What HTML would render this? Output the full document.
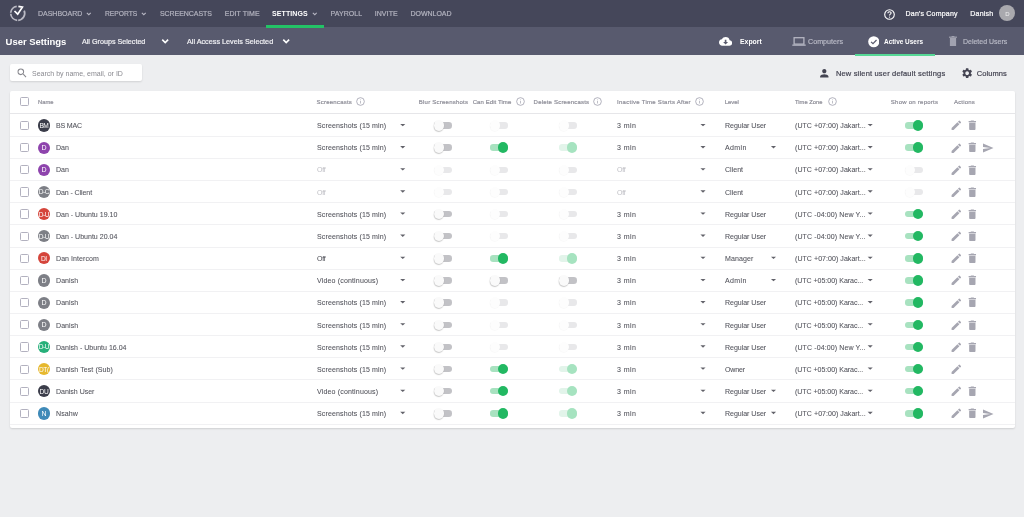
<!DOCTYPE html>
<html><head><meta charset="utf-8"><title>User Settings</title><style>
*{margin:0;padding:0;box-sizing:border-box}
html,body{width:1024px;height:517px;overflow:hidden;background:#edeef0;font-family:"Liberation Sans",sans-serif}
.abs{position:absolute}
.nb{position:absolute;left:0;top:0;width:1024px;height:27.2px;background:#45475a}
.b2{position:absolute;left:0;top:27.2px;width:1024px;height:28.2px;background:#585a6e}
.t{position:absolute;white-space:nowrap;line-height:normal;color:#52535b;letter-spacing:-0.18px}
.rw{-webkit-text-stroke:0.07px currentColor}
.nav{color:#b3b3bf}
.act{color:#fff}
.wh{color:#fff}
.wh2{color:#f2f2f5}
.g2{color:#b9bac6}
.bold{font-weight:700}
.ph{color:#8a8a90}
.dk{color:#444452}
.hd{color:#8e8e98}
.cb{position:absolute;width:9.2px;height:9.2px;border:1.2px solid #b2b1bf;border-radius:1.5px;background:#fff}
.av{position:absolute;width:12.2px;height:12.2px;border-radius:50%;text-align:center;overflow:hidden}
.av span{position:absolute;left:-6px;right:-6px;top:2.6px;font-size:6.6px;line-height:7px;color:#fff;text-align:center;letter-spacing:-0.45px}
.trk{position:absolute;width:18px;height:6.4px;border-radius:3.2px}
.knob{position:absolute;width:10.4px;height:10.4px;border-radius:50%}
.sh{box-shadow:-0.3px 0.9px 1.1px rgba(0,0,0,0.22)}
.shl{box-shadow:-0.3px 0.8px 0.8px rgba(0,0,0,0.03)}
.caret{position:absolute;width:0;height:0;border-left:2.6px solid transparent;border-right:2.6px solid transparent;border-top:2.7px solid #62626a}
.ic{position:absolute;width:12.67px;height:12.67px}
.ic svg{width:100%;height:100%;fill:#a6a6b1;display:block}
.ln{position:absolute;left:10px;width:1005px;height:1px;background:#f1f1f3}
</style></head>
<body>
<div id="wrap" style="position:absolute;left:0;top:0;width:1024px;height:517px;will-change:transform">
<div class="nb"></div><div class="b2"></div>
<div class="t nav" style="left:38.00px;top:10.10px;font-size:7px;-webkit-text-stroke:0.2px currentColor;letter-spacing:-0.011px;">DASHBOARD</div>
<div class="t nav" style="left:104.80px;top:10.10px;font-size:7px;-webkit-text-stroke:0.2px currentColor;letter-spacing:0.000px;transform:scaleX(0.9576);transform-origin:0 0;">REPORTS</div>
<div class="t nav" style="left:160.00px;top:10.10px;font-size:7px;-webkit-text-stroke:0.2px currentColor;letter-spacing:-0.064px;">SCREENCASTS</div>
<div class="t nav" style="left:224.70px;top:10.10px;font-size:7px;-webkit-text-stroke:0.2px currentColor;letter-spacing:0.082px;">EDIT TIME</div>
<div class="t nav" style="left:330.60px;top:10.10px;font-size:7px;-webkit-text-stroke:0.2px currentColor;letter-spacing:0.057px;">PAYROLL</div>
<div class="t nav" style="left:374.70px;top:10.10px;font-size:7px;-webkit-text-stroke:0.2px currentColor;letter-spacing:0.082px;">INVITE</div>
<div class="t nav" style="left:410.50px;top:10.10px;font-size:7px;-webkit-text-stroke:0.2px currentColor;letter-spacing:-0.024px;">DOWNLOAD</div>
<div class="t nav act" style="left:272.00px;top:10.10px;font-size:7px;font-weight:700;letter-spacing:0.095px;">SETTINGS</div>
<svg class="abs" style="left:86.2px;top:11.2px" width="5.6" height="5.6" viewBox="0 0 10 10"><path d="M1.5 3.2 L5 6.7 L8.5 3.2" fill="none" stroke="#b8b8c4" stroke-width="1.9"/></svg>
<svg class="abs" style="left:141.2px;top:11.2px" width="5.6" height="5.6" viewBox="0 0 10 10"><path d="M1.5 3.2 L5 6.7 L8.5 3.2" fill="none" stroke="#b8b8c4" stroke-width="1.9"/></svg>
<svg class="abs" style="left:311.8px;top:11.2px" width="5.6" height="5.6" viewBox="0 0 10 10"><path d="M1.5 3.2 L5 6.7 L8.5 3.2" fill="none" stroke="#b8b8c4" stroke-width="1.9"/></svg>
<div class="abs" style="left:266.3px;top:24.9px;width:58.2px;height:2.7px;background:#23c366"></div>
<svg class="abs" style="left:5px;top:2px" width="25" height="23" viewBox="0 0 25 23"><path d="M5.72 10.81A7.0 7.0 0 0 1 11.73 4.37M19.19 8.68A7.0 7.0 0 0 1 13.19 18.28M12.21 18.28A7.0 7.0 0 0 1 5.72 11.79" fill="none" stroke="#babac4" stroke-width="1.75"/><path d="M9.5 9.0 L12.7 12.2 L17.4 5.2 L13.4 4.4" fill="none" stroke="#ffffff" stroke-width="1.7" stroke-linejoin="miter"/></svg>
<svg class="abs" style="left:883.5px;top:8.5px" width="11" height="11" viewBox="0 0 11 11"><circle cx="5.5" cy="5.5" r="4.8" fill="none" stroke="#fff" stroke-width="1.1"/><path d="M3.9 4.3 Q3.9 2.7 5.5 2.7 Q7.1 2.7 7.1 4.1 Q7.1 5 5.9 5.6 Q5.5 5.9 5.5 6.6" fill="none" stroke="#fff" stroke-width="1.1"/><circle cx="5.5" cy="8.1" r="0.65" fill="#fff"/></svg>
<div class="t wh" style="left:905.60px;top:9.90px;font-size:7px;-webkit-text-stroke:0.2px currentColor;letter-spacing:0.193px;">Dan&#39;s Company</div>
<div class="t wh" style="left:970.30px;top:9.90px;font-size:7px;-webkit-text-stroke:0.2px currentColor;letter-spacing:0.221px;">Danish</div>
<div class="abs" style="left:998.9px;top:5.2px;width:16.2px;height:16.2px;border-radius:50%;background:#a9a9ae"></div>
<div class="t" style="left:1005.20px;top:10.70px;font-size:6px;color:#f0f0f0">D</div>
<div class="t wh" style="left:5.60px;top:35.90px;font-size:9.5px;font-weight:700;letter-spacing:-0.046px;">User Settings</div>
<div class="t wh2" style="left:81.60px;top:37.20px;font-size:7.5px;-webkit-text-stroke:0.2px currentColor;letter-spacing:0.000px;transform:scaleX(0.9559);transform-origin:0 0;">All Groups Selected</div>
<div class="t wh2" style="left:187.00px;top:37.20px;font-size:7.5px;-webkit-text-stroke:0.2px currentColor;letter-spacing:0.000px;transform:scaleX(0.9658);transform-origin:0 0;">All Access Levels Selected</div>
<svg class="abs" style="left:160.9px;top:37.4px" width="8.4" height="8.4" viewBox="0 0 10 10"><path d="M1.5 3.2 L5 6.7 L8.5 3.2" fill="none" stroke="#ffffff" stroke-width="1.9"/></svg>
<svg class="abs" style="left:281.7px;top:37.4px" width="8.4" height="8.4" viewBox="0 0 10 10"><path d="M1.5 3.2 L5 6.7 L8.5 3.2" fill="none" stroke="#ffffff" stroke-width="1.9"/></svg>
<svg class="abs" style="left:718.9px;top:37.4px" width="13.2" height="8.8" viewBox="0 0 24 16" preserveAspectRatio="none"><path d="M19.35 6.04A7.49 7.49 0 0 0 12 0C9.11 0 6.6 1.64 5.35 4.04A5.994 5.994 0 0 0 0 10c0 3.31 2.69 6 6 6h13c2.76 0 5-2.24 5-5 0-2.64-2.05-4.78-4.65-4.96z" fill="#fff"/><path d="M10.5 5h3v4h3l-4.5 4.5L7.5 9h3z" fill="#5a5b6e"/></svg>
<div class="t wh" style="left:739.90px;top:37.30px;font-size:8px;font-weight:700;letter-spacing:0.000px;transform:scaleX(0.8570);transform-origin:0 0;">Export</div>
<svg class="abs" style="left:791.5px;top:37px" width="14" height="9" viewBox="0 0 14 9"><rect x="2.1" y="0.7" width="9.8" height="6.4" fill="none" stroke="#b4b5c2" stroke-width="1.3"/><rect x="0.3" y="7.5" width="13.4" height="1.3" fill="#b4b5c2"/></svg>
<div class="t g2" style="left:808.00px;top:37.30px;font-size:8px;-webkit-text-stroke:0.2px currentColor;letter-spacing:0.000px;transform:scaleX(0.8946);transform-origin:0 0;">Computers</div>
<svg class="abs" style="left:867.5px;top:36px" width="11.5" height="11.5" viewBox="0 0 12 12"><circle cx="6" cy="6" r="5.8" fill="#fff"/><path d="M3.2 6.1 L5.2 8 L8.9 4.2" fill="none" stroke="#5a5b6e" stroke-width="1.3"/></svg>
<div class="t wh" style="left:883.60px;top:37.30px;font-size:8px;font-weight:700;letter-spacing:0.000px;transform:scaleX(0.8037);transform-origin:0 0;">Active Users</div>
<div class="abs" style="left:855.2px;top:54.3px;width:79.6px;height:1.3px;background:#56d896"></div>
<svg class="abs" style="left:949px;top:36.3px" width="8" height="10" viewBox="0 0 8 10"><rect x="0.9" y="2" width="6.2" height="8" fill="#a1a2b0"/><rect x="0" y="0.6" width="8" height="1.2" fill="#a1a2b0"/><rect x="2.6" y="0" width="2.8" height="1" fill="#a1a2b0"/></svg>
<div class="t g2" style="left:963.00px;top:37.30px;font-size:8px;-webkit-text-stroke:0.2px currentColor;letter-spacing:0.000px;transform:scaleX(0.8720);transform-origin:0 0;">Deleted Users</div>
<div class="abs" style="left:10px;top:64px;width:132px;height:17px;background:#fff;border-radius:2px;box-shadow:0 1px 2px rgba(0,0,0,0.12)"></div>
<svg class="abs" style="left:16px;top:67px" width="12.2" height="12.2" viewBox="0 0 24 24"><path d="M15.5 14h-.79l-.28-.27A6.47 6.47 0 0 0 16 9.5 6.5 6.5 0 1 0 9.5 16c1.61 0 3.09-.59 4.23-1.57l.27.28v.79l5 4.99L20.49 19l-4.99-5zm-6 0C7.01 14 5 11.99 5 9.5S7.01 5 9.5 5 14 7.01 14 9.5 11.99 14 9.5 14z" fill="#88888e"/></svg>
<div class="t ph" style="left:31.90px;top:68.90px;font-size:8px;letter-spacing:0.000px;transform:scaleX(0.8775);transform-origin:0 0;">Search by name, email, or ID</div>
<svg class="abs" style="left:818.3px;top:66.5px" width="12.6" height="12.6" viewBox="0 0 24 24"><path d="M12 12c2.21 0 4-1.79 4-4s-1.79-4-4-4-4 1.79-4 4 1.79 4 4 4zm0 2c-2.67 0-8 1.34-8 4v2h16v-2c0-2.66-5.33-4-8-4z" fill="#444452"/></svg>
<div class="t dk" style="left:835.90px;top:69.10px;font-size:7.5px;-webkit-text-stroke:0.2px currentColor;letter-spacing:0.176px;">New silent user default settings</div>
<svg class="abs" style="left:961.2px;top:66.9px" width="12.3" height="12.3" viewBox="0 0 24 24"><path d="M19.14 12.94c.04-.3.06-.61.06-.94 0-.32-.02-.64-.07-.94l2.03-1.58a.49.49 0 0 0 .12-.61l-1.92-3.32a.488.488 0 0 0-.59-.22l-2.39.96c-.5-.38-1.03-.7-1.62-.94l-.36-2.54a.484.484 0 0 0-.48-.41h-3.84c-.24 0-.43.17-.47.41l-.36 2.54c-.59.24-1.13.57-1.62.94l-2.39-.96c-.22-.08-.47 0-.59.22L2.74 8.87c-.12.21-.08.47.12.61l2.03 1.58c-.05.3-.09.63-.09.94s.02.64.07.94l-2.03 1.58a.49.49 0 0 0-.12.61l1.92 3.32c.12.22.37.29.59.22l2.39-.96c.5.38 1.03.7 1.62.94l.36 2.54c.05.24.24.41.48.41h3.84c.24 0 .44-.17.47-.41l.36-2.54c.59-.24 1.13-.56 1.62-.94l2.39.96c.22.08.47 0 .59-.22l1.92-3.32c.12-.22.07-.47-.12-.61l-2.01-1.58zM12 15.6c-1.98 0-3.6-1.62-3.6-3.6s1.62-3.6 3.6-3.6 3.6 1.62 3.6 3.6-1.62 3.6-3.6 3.6z" fill="#444452"/></svg>
<div class="t dk" style="left:976.80px;top:69.10px;font-size:7.5px;-webkit-text-stroke:0.2px currentColor;letter-spacing:0.043px;">Columns</div>
<div class="abs" style="left:10px;top:91px;width:1005px;height:337px;background:#fff;border-radius:2px;box-shadow:0 1px 2px rgba(0,0,0,0.13)"></div>
<div class="cb" style="left:19.5px;top:97.2px"></div>
<div class="t hd" style="left:37.80px;top:99.10px;font-size:6px;-webkit-text-stroke:0.2px currentColor;letter-spacing:0.000px;transform:scaleX(0.9659);transform-origin:0 0;">Name</div>
<div class="t hd" style="left:316.60px;top:99.10px;font-size:6px;-webkit-text-stroke:0.2px currentColor;letter-spacing:0.219px;">Screencasts</div>
<svg class="abs" style="left:355.5px;top:97.2px" width="9" height="9" viewBox="0 0 9 9"><circle cx="4.5" cy="4.5" r="3.85" fill="none" stroke="#9a9aa8" stroke-width="0.75"/><rect x="4.15" y="3.9" width="0.7" height="2.6" fill="#a4a4b0"/><rect x="4.15" y="2.5" width="0.7" height="0.7" fill="#a4a4b0"/></svg>
<div class="t hd" style="left:418.75px;top:99.10px;font-size:6px;-webkit-text-stroke:0.2px currentColor;letter-spacing:0.237px;">Blur Screenshots</div>
<div class="t hd" style="left:472.70px;top:99.10px;font-size:6px;-webkit-text-stroke:0.2px currentColor;letter-spacing:0.071px;">Can Edit Time</div>
<svg class="abs" style="left:515.7px;top:97.2px" width="9" height="9" viewBox="0 0 9 9"><circle cx="4.5" cy="4.5" r="3.85" fill="none" stroke="#9a9aa8" stroke-width="0.75"/><rect x="4.15" y="3.9" width="0.7" height="2.6" fill="#a4a4b0"/><rect x="4.15" y="2.5" width="0.7" height="0.7" fill="#a4a4b0"/></svg>
<div class="t hd" style="left:533.60px;top:99.10px;font-size:6px;-webkit-text-stroke:0.2px currentColor;letter-spacing:0.199px;">Delete Screencasts</div>
<svg class="abs" style="left:592.5px;top:97.2px" width="9" height="9" viewBox="0 0 9 9"><circle cx="4.5" cy="4.5" r="3.85" fill="none" stroke="#9a9aa8" stroke-width="0.75"/><rect x="4.15" y="3.9" width="0.7" height="2.6" fill="#a4a4b0"/><rect x="4.15" y="2.5" width="0.7" height="0.7" fill="#a4a4b0"/></svg>
<div class="t hd" style="left:617.00px;top:99.10px;font-size:6px;-webkit-text-stroke:0.2px currentColor;letter-spacing:0.275px;">Inactive Time Starts After</div>
<svg class="abs" style="left:694.5px;top:97.2px" width="9" height="9" viewBox="0 0 9 9"><circle cx="4.5" cy="4.5" r="3.85" fill="none" stroke="#9a9aa8" stroke-width="0.75"/><rect x="4.15" y="3.9" width="0.7" height="2.6" fill="#a4a4b0"/><rect x="4.15" y="2.5" width="0.7" height="0.7" fill="#a4a4b0"/></svg>
<div class="t hd" style="left:724.70px;top:99.10px;font-size:6px;-webkit-text-stroke:0.2px currentColor;letter-spacing:-0.028px;">Level</div>
<div class="t hd" style="left:795.00px;top:99.10px;font-size:6px;-webkit-text-stroke:0.2px currentColor;letter-spacing:0.000px;transform:scaleX(0.9617);transform-origin:0 0;">Time Zone</div>
<svg class="abs" style="left:827.5px;top:97.2px" width="9" height="9" viewBox="0 0 9 9"><circle cx="4.5" cy="4.5" r="3.85" fill="none" stroke="#9a9aa8" stroke-width="0.75"/><rect x="4.15" y="3.9" width="0.7" height="2.6" fill="#a4a4b0"/><rect x="4.15" y="2.5" width="0.7" height="0.7" fill="#a4a4b0"/></svg>
<div class="t hd" style="left:890.80px;top:99.10px;font-size:6px;-webkit-text-stroke:0.2px currentColor;letter-spacing:0.251px;">Show on reports</div>
<div class="t hd" style="left:954.00px;top:99.10px;font-size:6px;-webkit-text-stroke:0.2px currentColor;letter-spacing:0.171px;">Actions</div>
<div class="ln" style="top:113.4px;background:#e6e6e9"></div>
<div class="cb" style="left:19.7px;top:120.88px"></div>
<div class="av" style="left:37.8px;top:119.38px;background:#3b3d4a"><span>BM</span></div>
<div class="t rw" style="left:55.90px;top:121.18px;font-size:8px;letter-spacing:-0.202px;transform:scaleX(0.8800);transform-origin:0 0;">BS MAC</div>
<div class="t rw" style="left:316.60px;top:121.18px;font-size:8px;letter-spacing:0.131px;transform:scaleX(0.8800);transform-origin:0 0;">Screenshots (15 min)</div>

<div class="trk" style="left:434.30px;top:122.28px;background:#c2c2c6"></div><div class="knob sh" style="left:434.10px;top:120.28px;background:#fafafa"></div>
<div class="trk" style="left:489.80px;top:122.28px;background:#e8e8ea"></div><div class="knob shl" style="left:489.60px;top:120.28px;background:#fdfdfd"></div>
<div class="trk" style="left:559.00px;top:122.28px;background:#e8e8ea"></div><div class="knob shl" style="left:558.80px;top:120.28px;background:#fdfdfd"></div>
<div class="t rw" style="left:617.00px;top:121.18px;font-size:8px;letter-spacing:0.477px;transform:scaleX(0.8800);transform-origin:0 0;">3 min</div>

<div class="t rw" style="left:724.70px;top:121.18px;font-size:8px;letter-spacing:-0.038px;transform:scaleX(0.8800);transform-origin:0 0;">Regular User</div>
<div class="t rw" style="left:795.00px;top:121.18px;font-size:8px;letter-spacing:0.047px;transform:scaleX(0.8800);transform-origin:0 0;">(UTC +07:00) Jakart...</div>

<div class="trk" style="left:905.10px;top:122.28px;background:#a8e2c0"></div><div class="knob" style="left:912.90px;top:120.28px;background:#22b862"></div>
<div class="ic" style="left:949.6px;top:119.38px"><svg viewBox="0 0 24 24"><path d="M3 17.25V21h3.75L17.81 9.94l-3.75-3.75L3 17.25zM20.71 7.04a1 1 0 0 0 0-1.41l-2.34-2.34a1 1 0 0 0-1.41 0l-1.83 1.83 3.75 3.75 1.83-1.83z"/></svg></div>
<div class="ic" style="left:965.9px;top:119.28px"><svg viewBox="0 0 24 24"><path d="M6 19c0 1.1.9 2 2 2h8c1.1 0 2-.9 2-2V7H6v12zM19 4h-3.5l-1-1h-5l-1 1H5v2h14V4z"/></svg></div>
<div class="ln" style="top:135.80px"></div>
<div class="cb" style="left:19.7px;top:143.03px"></div>
<div class="av" style="left:37.8px;top:141.53px;background:#8e44ad"><span style="font-size:7px;top:2.6px">D</span></div>
<div class="t rw" style="left:55.90px;top:143.32px;font-size:8px;letter-spacing:-0.068px;transform:scaleX(0.8800);transform-origin:0 0;">Dan</div>
<div class="t rw" style="left:316.60px;top:143.32px;font-size:8px;letter-spacing:0.131px;transform:scaleX(0.8800);transform-origin:0 0;">Screenshots (15 min)</div>

<div class="trk" style="left:434.30px;top:144.43px;background:#c2c2c6"></div><div class="knob sh" style="left:434.10px;top:142.43px;background:#fafafa"></div>
<div class="trk" style="left:489.80px;top:144.43px;background:#a8e2c0"></div><div class="knob" style="left:497.60px;top:142.43px;background:#22b862"></div>
<div class="trk" style="left:559.00px;top:144.43px;background:#e2f4ea"></div><div class="knob" style="left:566.80px;top:142.43px;background:#a6e3c0"></div>
<div class="t rw" style="left:617.00px;top:143.32px;font-size:8px;letter-spacing:0.477px;transform:scaleX(0.8800);transform-origin:0 0;">3 min</div>

<div class="t rw" style="left:724.70px;top:143.32px;font-size:8px;letter-spacing:0.409px;transform:scaleX(0.8800);transform-origin:0 0;">Admin</div>

<div class="t rw" style="left:795.00px;top:143.32px;font-size:8px;letter-spacing:0.047px;transform:scaleX(0.8800);transform-origin:0 0;">(UTC +07:00) Jakart...</div>

<div class="trk" style="left:905.10px;top:144.43px;background:#a8e2c0"></div><div class="knob" style="left:912.90px;top:142.43px;background:#22b862"></div>
<div class="ic" style="left:949.6px;top:141.53px"><svg viewBox="0 0 24 24"><path d="M3 17.25V21h3.75L17.81 9.94l-3.75-3.75L3 17.25zM20.71 7.04a1 1 0 0 0 0-1.41l-2.34-2.34a1 1 0 0 0-1.41 0l-1.83 1.83 3.75 3.75 1.83-1.83z"/></svg></div>
<div class="ic" style="left:965.9px;top:141.43px"><svg viewBox="0 0 24 24"><path d="M6 19c0 1.1.9 2 2 2h8c1.1 0 2-.9 2-2V7H6v12zM19 4h-3.5l-1-1h-5l-1 1H5v2h14V4z"/></svg></div>
<div class="ic" style="left:981.9px;top:142.03px;width:12px;height:12px"><svg viewBox="0 0 24 24"><path d="M2.01 21L23 12 2.01 3 2 10l15 2-15 2z"/></svg></div>
<div class="ln" style="top:157.95px"></div>
<div class="cb" style="left:19.7px;top:165.17px"></div>
<div class="av" style="left:37.8px;top:163.67px;background:#8e44ad"><span style="font-size:7px;top:2.6px">D</span></div>
<div class="t rw" style="left:55.90px;top:165.47px;font-size:8px;letter-spacing:-0.068px;transform:scaleX(0.8800);transform-origin:0 0;">Dan</div>
<div class="t rw" style="left:316.60px;top:165.47px;font-size:8px;letter-spacing:-0.253px;transform:scaleX(0.8800);transform-origin:0 0;color:#c3c3c8">Off</div>

<div class="trk" style="left:434.30px;top:166.57px;background:#e8e8ea"></div><div class="knob shl" style="left:434.10px;top:164.57px;background:#fdfdfd"></div>
<div class="trk" style="left:489.80px;top:166.57px;background:#e8e8ea"></div><div class="knob shl" style="left:489.60px;top:164.57px;background:#fdfdfd"></div>
<div class="trk" style="left:559.00px;top:166.57px;background:#e8e8ea"></div><div class="knob shl" style="left:558.80px;top:164.57px;background:#fdfdfd"></div>
<div class="t rw" style="left:617.00px;top:165.47px;font-size:8px;letter-spacing:-0.253px;transform:scaleX(0.8800);transform-origin:0 0;color:#c3c3c8">Off</div>

<div class="t rw" style="left:724.70px;top:165.47px;font-size:8px;letter-spacing:0.004px;transform:scaleX(0.8800);transform-origin:0 0;">Client</div>
<div class="t rw" style="left:795.00px;top:165.47px;font-size:8px;letter-spacing:0.047px;transform:scaleX(0.8800);transform-origin:0 0;">(UTC +07:00) Jakart...</div>

<div class="trk" style="left:905.10px;top:166.57px;background:#e8e8ea"></div><div class="knob shl" style="left:904.90px;top:164.57px;background:#fdfdfd"></div>
<div class="ic" style="left:949.6px;top:163.67px"><svg viewBox="0 0 24 24"><path d="M3 17.25V21h3.75L17.81 9.94l-3.75-3.75L3 17.25zM20.71 7.04a1 1 0 0 0 0-1.41l-2.34-2.34a1 1 0 0 0-1.41 0l-1.83 1.83 3.75 3.75 1.83-1.83z"/></svg></div>
<div class="ic" style="left:965.9px;top:163.57px"><svg viewBox="0 0 24 24"><path d="M6 19c0 1.1.9 2 2 2h8c1.1 0 2-.9 2-2V7H6v12zM19 4h-3.5l-1-1h-5l-1 1H5v2h14V4z"/></svg></div>
<div class="ln" style="top:180.10px"></div>
<div class="cb" style="left:19.7px;top:187.32px"></div>
<div class="av" style="left:37.8px;top:185.82px;background:#7d7f86"><span>D-C</span></div>
<div class="t rw" style="left:55.90px;top:187.62px;font-size:8px;letter-spacing:-0.109px;transform:scaleX(0.8800);transform-origin:0 0;">Dan - Client</div>
<div class="t rw" style="left:316.60px;top:187.62px;font-size:8px;letter-spacing:-0.253px;transform:scaleX(0.8800);transform-origin:0 0;color:#c3c3c8">Off</div>

<div class="trk" style="left:434.30px;top:188.72px;background:#e8e8ea"></div><div class="knob shl" style="left:434.10px;top:186.72px;background:#fdfdfd"></div>
<div class="trk" style="left:489.80px;top:188.72px;background:#e8e8ea"></div><div class="knob shl" style="left:489.60px;top:186.72px;background:#fdfdfd"></div>
<div class="trk" style="left:559.00px;top:188.72px;background:#e8e8ea"></div><div class="knob shl" style="left:558.80px;top:186.72px;background:#fdfdfd"></div>
<div class="t rw" style="left:617.00px;top:187.62px;font-size:8px;letter-spacing:-0.253px;transform:scaleX(0.8800);transform-origin:0 0;color:#c3c3c8">Off</div>

<div class="t rw" style="left:724.70px;top:187.62px;font-size:8px;letter-spacing:0.004px;transform:scaleX(0.8800);transform-origin:0 0;">Client</div>
<div class="t rw" style="left:795.00px;top:187.62px;font-size:8px;letter-spacing:0.047px;transform:scaleX(0.8800);transform-origin:0 0;">(UTC +07:00) Jakart...</div>

<div class="trk" style="left:905.10px;top:188.72px;background:#e8e8ea"></div><div class="knob shl" style="left:904.90px;top:186.72px;background:#fdfdfd"></div>
<div class="ic" style="left:949.6px;top:185.82px"><svg viewBox="0 0 24 24"><path d="M3 17.25V21h3.75L17.81 9.94l-3.75-3.75L3 17.25zM20.71 7.04a1 1 0 0 0 0-1.41l-2.34-2.34a1 1 0 0 0-1.41 0l-1.83 1.83 3.75 3.75 1.83-1.83z"/></svg></div>
<div class="ic" style="left:965.9px;top:185.72px"><svg viewBox="0 0 24 24"><path d="M6 19c0 1.1.9 2 2 2h8c1.1 0 2-.9 2-2V7H6v12zM19 4h-3.5l-1-1h-5l-1 1H5v2h14V4z"/></svg></div>
<div class="ln" style="top:202.25px"></div>
<div class="cb" style="left:19.7px;top:209.47px"></div>
<div class="av" style="left:37.8px;top:207.97px;background:#d5453b"><span>D-U</span></div>
<div class="t rw" style="left:55.90px;top:209.77px;font-size:8px;letter-spacing:-0.009px;transform:scaleX(0.8800);transform-origin:0 0;">Dan - Ubuntu 19.10</div>
<div class="t rw" style="left:316.60px;top:209.77px;font-size:8px;letter-spacing:0.131px;transform:scaleX(0.8800);transform-origin:0 0;">Screenshots (15 min)</div>

<div class="trk" style="left:434.30px;top:210.88px;background:#c2c2c6"></div><div class="knob sh" style="left:434.10px;top:208.88px;background:#fafafa"></div>
<div class="trk" style="left:489.80px;top:210.88px;background:#e8e8ea"></div><div class="knob shl" style="left:489.60px;top:208.88px;background:#fdfdfd"></div>
<div class="trk" style="left:559.00px;top:210.88px;background:#e8e8ea"></div><div class="knob shl" style="left:558.80px;top:208.88px;background:#fdfdfd"></div>
<div class="t rw" style="left:617.00px;top:209.77px;font-size:8px;letter-spacing:0.477px;transform:scaleX(0.8800);transform-origin:0 0;">3 min</div>

<div class="t rw" style="left:724.70px;top:209.77px;font-size:8px;letter-spacing:-0.038px;transform:scaleX(0.8800);transform-origin:0 0;">Regular User</div>
<div class="t rw" style="left:795.00px;top:209.77px;font-size:8px;letter-spacing:0.106px;transform:scaleX(0.8800);transform-origin:0 0;">(UTC -04:00) New Y...</div>

<div class="trk" style="left:905.10px;top:210.88px;background:#a8e2c0"></div><div class="knob" style="left:912.90px;top:208.88px;background:#22b862"></div>
<div class="ic" style="left:949.6px;top:207.97px"><svg viewBox="0 0 24 24"><path d="M3 17.25V21h3.75L17.81 9.94l-3.75-3.75L3 17.25zM20.71 7.04a1 1 0 0 0 0-1.41l-2.34-2.34a1 1 0 0 0-1.41 0l-1.83 1.83 3.75 3.75 1.83-1.83z"/></svg></div>
<div class="ic" style="left:965.9px;top:207.88px"><svg viewBox="0 0 24 24"><path d="M6 19c0 1.1.9 2 2 2h8c1.1 0 2-.9 2-2V7H6v12zM19 4h-3.5l-1-1h-5l-1 1H5v2h14V4z"/></svg></div>
<div class="ln" style="top:224.40px"></div>
<div class="cb" style="left:19.7px;top:231.62px"></div>
<div class="av" style="left:37.8px;top:230.12px;background:#7d7f86"><span>D-U</span></div>
<div class="t rw" style="left:55.90px;top:231.92px;font-size:8px;letter-spacing:-0.009px;transform:scaleX(0.8800);transform-origin:0 0;">Dan - Ubuntu 20.04</div>
<div class="t rw" style="left:316.60px;top:231.92px;font-size:8px;letter-spacing:0.131px;transform:scaleX(0.8800);transform-origin:0 0;">Screenshots (15 min)</div>

<div class="trk" style="left:434.30px;top:233.03px;background:#c2c2c6"></div><div class="knob sh" style="left:434.10px;top:231.03px;background:#fafafa"></div>
<div class="trk" style="left:489.80px;top:233.03px;background:#e8e8ea"></div><div class="knob shl" style="left:489.60px;top:231.03px;background:#fdfdfd"></div>
<div class="trk" style="left:559.00px;top:233.03px;background:#e8e8ea"></div><div class="knob shl" style="left:558.80px;top:231.03px;background:#fdfdfd"></div>
<div class="t rw" style="left:617.00px;top:231.92px;font-size:8px;letter-spacing:0.477px;transform:scaleX(0.8800);transform-origin:0 0;">3 min</div>

<div class="t rw" style="left:724.70px;top:231.92px;font-size:8px;letter-spacing:-0.038px;transform:scaleX(0.8800);transform-origin:0 0;">Regular User</div>
<div class="t rw" style="left:795.00px;top:231.92px;font-size:8px;letter-spacing:0.106px;transform:scaleX(0.8800);transform-origin:0 0;">(UTC -04:00) New Y...</div>

<div class="trk" style="left:905.10px;top:233.03px;background:#a8e2c0"></div><div class="knob" style="left:912.90px;top:231.03px;background:#22b862"></div>
<div class="ic" style="left:949.6px;top:230.12px"><svg viewBox="0 0 24 24"><path d="M3 17.25V21h3.75L17.81 9.94l-3.75-3.75L3 17.25zM20.71 7.04a1 1 0 0 0 0-1.41l-2.34-2.34a1 1 0 0 0-1.41 0l-1.83 1.83 3.75 3.75 1.83-1.83z"/></svg></div>
<div class="ic" style="left:965.9px;top:230.03px"><svg viewBox="0 0 24 24"><path d="M6 19c0 1.1.9 2 2 2h8c1.1 0 2-.9 2-2V7H6v12zM19 4h-3.5l-1-1h-5l-1 1H5v2h14V4z"/></svg></div>
<div class="ln" style="top:246.55px"></div>
<div class="cb" style="left:19.7px;top:253.78px"></div>
<div class="av" style="left:37.8px;top:252.28px;background:#d5453b"><span>DI</span></div>
<div class="t rw" style="left:55.90px;top:254.07px;font-size:8px;letter-spacing:0.067px;transform:scaleX(0.8800);transform-origin:0 0;">Dan Intercom</div>
<div class="t rw" style="left:316.60px;top:254.07px;font-size:8px;letter-spacing:-0.253px;transform:scaleX(0.8800);transform-origin:0 0;">Off</div>

<div class="trk" style="left:434.30px;top:255.18px;background:#c2c2c6"></div><div class="knob sh" style="left:434.10px;top:253.18px;background:#fafafa"></div>
<div class="trk" style="left:489.80px;top:255.18px;background:#a8e2c0"></div><div class="knob" style="left:497.60px;top:253.18px;background:#22b862"></div>
<div class="trk" style="left:559.00px;top:255.18px;background:#e2f4ea"></div><div class="knob" style="left:566.80px;top:253.18px;background:#a6e3c0"></div>
<div class="t rw" style="left:617.00px;top:254.07px;font-size:8px;letter-spacing:0.477px;transform:scaleX(0.8800);transform-origin:0 0;">3 min</div>

<div class="t rw" style="left:724.70px;top:254.07px;font-size:8px;letter-spacing:0.117px;transform:scaleX(0.8800);transform-origin:0 0;">Manager</div>

<div class="t rw" style="left:795.00px;top:254.07px;font-size:8px;letter-spacing:0.047px;transform:scaleX(0.8800);transform-origin:0 0;">(UTC +07:00) Jakart...</div>

<div class="trk" style="left:905.10px;top:255.18px;background:#a8e2c0"></div><div class="knob" style="left:912.90px;top:253.18px;background:#22b862"></div>
<div class="ic" style="left:949.6px;top:252.28px"><svg viewBox="0 0 24 24"><path d="M3 17.25V21h3.75L17.81 9.94l-3.75-3.75L3 17.25zM20.71 7.04a1 1 0 0 0 0-1.41l-2.34-2.34a1 1 0 0 0-1.41 0l-1.83 1.83 3.75 3.75 1.83-1.83z"/></svg></div>
<div class="ic" style="left:965.9px;top:252.18px"><svg viewBox="0 0 24 24"><path d="M6 19c0 1.1.9 2 2 2h8c1.1 0 2-.9 2-2V7H6v12zM19 4h-3.5l-1-1h-5l-1 1H5v2h14V4z"/></svg></div>
<div class="ln" style="top:268.70px"></div>
<div class="cb" style="left:19.7px;top:275.92px"></div>
<div class="av" style="left:37.8px;top:274.42px;background:#7d7f86"><span style="font-size:7px;top:2.6px">D</span></div>
<div class="t rw" style="left:55.90px;top:276.22px;font-size:8px;letter-spacing:0.064px;transform:scaleX(0.8800);transform-origin:0 0;">Danish</div>
<div class="t rw" style="left:316.60px;top:276.22px;font-size:8px;letter-spacing:0.169px;transform:scaleX(0.8800);transform-origin:0 0;">Video (continuous)</div>

<div class="trk" style="left:434.30px;top:277.32px;background:#c2c2c6"></div><div class="knob sh" style="left:434.10px;top:275.32px;background:#fafafa"></div>
<div class="trk" style="left:489.80px;top:277.32px;background:#c2c2c6"></div><div class="knob sh" style="left:489.60px;top:275.32px;background:#fafafa"></div>
<div class="trk" style="left:559.00px;top:277.32px;background:#c2c2c6"></div><div class="knob sh" style="left:558.80px;top:275.32px;background:#fafafa"></div>
<div class="t rw" style="left:617.00px;top:276.22px;font-size:8px;letter-spacing:0.477px;transform:scaleX(0.8800);transform-origin:0 0;">3 min</div>

<div class="t rw" style="left:724.70px;top:276.22px;font-size:8px;letter-spacing:0.409px;transform:scaleX(0.8800);transform-origin:0 0;">Admin</div>

<div class="t rw" style="left:795.00px;top:276.22px;font-size:8px;letter-spacing:-0.049px;transform:scaleX(0.8800);transform-origin:0 0;">(UTC +05:00) Karac...</div>

<div class="trk" style="left:905.10px;top:277.32px;background:#a8e2c0"></div><div class="knob" style="left:912.90px;top:275.32px;background:#22b862"></div>
<div class="ic" style="left:949.6px;top:274.42px"><svg viewBox="0 0 24 24"><path d="M3 17.25V21h3.75L17.81 9.94l-3.75-3.75L3 17.25zM20.71 7.04a1 1 0 0 0 0-1.41l-2.34-2.34a1 1 0 0 0-1.41 0l-1.83 1.83 3.75 3.75 1.83-1.83z"/></svg></div>
<div class="ic" style="left:965.9px;top:274.32px"><svg viewBox="0 0 24 24"><path d="M6 19c0 1.1.9 2 2 2h8c1.1 0 2-.9 2-2V7H6v12zM19 4h-3.5l-1-1h-5l-1 1H5v2h14V4z"/></svg></div>
<div class="ln" style="top:290.85px"></div>
<div class="cb" style="left:19.7px;top:298.07px"></div>
<div class="av" style="left:37.8px;top:296.57px;background:#7d7f86"><span style="font-size:7px;top:2.6px">D</span></div>
<div class="t rw" style="left:55.90px;top:298.38px;font-size:8px;letter-spacing:0.064px;transform:scaleX(0.8800);transform-origin:0 0;">Danish</div>
<div class="t rw" style="left:316.60px;top:298.38px;font-size:8px;letter-spacing:0.131px;transform:scaleX(0.8800);transform-origin:0 0;">Screenshots (15 min)</div>

<div class="trk" style="left:434.30px;top:299.48px;background:#c2c2c6"></div><div class="knob sh" style="left:434.10px;top:297.48px;background:#fafafa"></div>
<div class="trk" style="left:489.80px;top:299.48px;background:#e8e8ea"></div><div class="knob shl" style="left:489.60px;top:297.48px;background:#fdfdfd"></div>
<div class="trk" style="left:559.00px;top:299.48px;background:#e8e8ea"></div><div class="knob shl" style="left:558.80px;top:297.48px;background:#fdfdfd"></div>
<div class="t rw" style="left:617.00px;top:298.38px;font-size:8px;letter-spacing:0.477px;transform:scaleX(0.8800);transform-origin:0 0;">3 min</div>

<div class="t rw" style="left:724.70px;top:298.38px;font-size:8px;letter-spacing:-0.038px;transform:scaleX(0.8800);transform-origin:0 0;">Regular User</div>
<div class="t rw" style="left:795.00px;top:298.38px;font-size:8px;letter-spacing:-0.049px;transform:scaleX(0.8800);transform-origin:0 0;">(UTC +05:00) Karac...</div>

<div class="trk" style="left:905.10px;top:299.48px;background:#a8e2c0"></div><div class="knob" style="left:912.90px;top:297.48px;background:#22b862"></div>
<div class="ic" style="left:949.6px;top:296.57px"><svg viewBox="0 0 24 24"><path d="M3 17.25V21h3.75L17.81 9.94l-3.75-3.75L3 17.25zM20.71 7.04a1 1 0 0 0 0-1.41l-2.34-2.34a1 1 0 0 0-1.41 0l-1.83 1.83 3.75 3.75 1.83-1.83z"/></svg></div>
<div class="ic" style="left:965.9px;top:296.48px"><svg viewBox="0 0 24 24"><path d="M6 19c0 1.1.9 2 2 2h8c1.1 0 2-.9 2-2V7H6v12zM19 4h-3.5l-1-1h-5l-1 1H5v2h14V4z"/></svg></div>
<div class="ln" style="top:313.00px"></div>
<div class="cb" style="left:19.7px;top:320.22px"></div>
<div class="av" style="left:37.8px;top:318.72px;background:#7d7f86"><span style="font-size:7px;top:2.6px">D</span></div>
<div class="t rw" style="left:55.90px;top:320.52px;font-size:8px;letter-spacing:0.064px;transform:scaleX(0.8800);transform-origin:0 0;">Danish</div>
<div class="t rw" style="left:316.60px;top:320.52px;font-size:8px;letter-spacing:0.131px;transform:scaleX(0.8800);transform-origin:0 0;">Screenshots (15 min)</div>

<div class="trk" style="left:434.30px;top:321.62px;background:#c2c2c6"></div><div class="knob sh" style="left:434.10px;top:319.62px;background:#fafafa"></div>
<div class="trk" style="left:489.80px;top:321.62px;background:#e8e8ea"></div><div class="knob shl" style="left:489.60px;top:319.62px;background:#fdfdfd"></div>
<div class="trk" style="left:559.00px;top:321.62px;background:#e8e8ea"></div><div class="knob shl" style="left:558.80px;top:319.62px;background:#fdfdfd"></div>
<div class="t rw" style="left:617.00px;top:320.52px;font-size:8px;letter-spacing:0.477px;transform:scaleX(0.8800);transform-origin:0 0;">3 min</div>

<div class="t rw" style="left:724.70px;top:320.52px;font-size:8px;letter-spacing:-0.038px;transform:scaleX(0.8800);transform-origin:0 0;">Regular User</div>
<div class="t rw" style="left:795.00px;top:320.52px;font-size:8px;letter-spacing:-0.049px;transform:scaleX(0.8800);transform-origin:0 0;">(UTC +05:00) Karac...</div>

<div class="trk" style="left:905.10px;top:321.62px;background:#a8e2c0"></div><div class="knob" style="left:912.90px;top:319.62px;background:#22b862"></div>
<div class="ic" style="left:949.6px;top:318.72px"><svg viewBox="0 0 24 24"><path d="M3 17.25V21h3.75L17.81 9.94l-3.75-3.75L3 17.25zM20.71 7.04a1 1 0 0 0 0-1.41l-2.34-2.34a1 1 0 0 0-1.41 0l-1.83 1.83 3.75 3.75 1.83-1.83z"/></svg></div>
<div class="ic" style="left:965.9px;top:318.62px"><svg viewBox="0 0 24 24"><path d="M6 19c0 1.1.9 2 2 2h8c1.1 0 2-.9 2-2V7H6v12zM19 4h-3.5l-1-1h-5l-1 1H5v2h14V4z"/></svg></div>
<div class="ln" style="top:335.15px"></div>
<div class="cb" style="left:19.7px;top:342.37px"></div>
<div class="av" style="left:37.8px;top:340.87px;background:#27b07a"><span>D-U</span></div>
<div class="t rw" style="left:55.90px;top:342.67px;font-size:8px;letter-spacing:0.004px;transform:scaleX(0.8800);transform-origin:0 0;">Danish - Ubuntu 16.04</div>
<div class="t rw" style="left:316.60px;top:342.67px;font-size:8px;letter-spacing:0.131px;transform:scaleX(0.8800);transform-origin:0 0;">Screenshots (15 min)</div>

<div class="trk" style="left:434.30px;top:343.77px;background:#c2c2c6"></div><div class="knob sh" style="left:434.10px;top:341.77px;background:#fafafa"></div>
<div class="trk" style="left:489.80px;top:343.77px;background:#e8e8ea"></div><div class="knob shl" style="left:489.60px;top:341.77px;background:#fdfdfd"></div>
<div class="trk" style="left:559.00px;top:343.77px;background:#e8e8ea"></div><div class="knob shl" style="left:558.80px;top:341.77px;background:#fdfdfd"></div>
<div class="t rw" style="left:617.00px;top:342.67px;font-size:8px;letter-spacing:0.477px;transform:scaleX(0.8800);transform-origin:0 0;">3 min</div>

<div class="t rw" style="left:724.70px;top:342.67px;font-size:8px;letter-spacing:-0.038px;transform:scaleX(0.8800);transform-origin:0 0;">Regular User</div>
<div class="t rw" style="left:795.00px;top:342.67px;font-size:8px;letter-spacing:0.106px;transform:scaleX(0.8800);transform-origin:0 0;">(UTC -04:00) New Y...</div>

<div class="trk" style="left:905.10px;top:343.77px;background:#a8e2c0"></div><div class="knob" style="left:912.90px;top:341.77px;background:#22b862"></div>
<div class="ic" style="left:949.6px;top:340.87px"><svg viewBox="0 0 24 24"><path d="M3 17.25V21h3.75L17.81 9.94l-3.75-3.75L3 17.25zM20.71 7.04a1 1 0 0 0 0-1.41l-2.34-2.34a1 1 0 0 0-1.41 0l-1.83 1.83 3.75 3.75 1.83-1.83z"/></svg></div>
<div class="ic" style="left:965.9px;top:340.77px"><svg viewBox="0 0 24 24"><path d="M6 19c0 1.1.9 2 2 2h8c1.1 0 2-.9 2-2V7H6v12zM19 4h-3.5l-1-1h-5l-1 1H5v2h14V4z"/></svg></div>
<div class="ln" style="top:357.30px"></div>
<div class="cb" style="left:19.7px;top:364.52px"></div>
<div class="av" style="left:37.8px;top:363.02px;background:#e6b82e"><span>DT(</span></div>
<div class="t rw" style="left:55.90px;top:364.82px;font-size:8px;letter-spacing:0.075px;transform:scaleX(0.8800);transform-origin:0 0;">Danish Test (Sub)</div>
<div class="t rw" style="left:316.60px;top:364.82px;font-size:8px;letter-spacing:0.131px;transform:scaleX(0.8800);transform-origin:0 0;">Screenshots (15 min)</div>

<div class="trk" style="left:434.30px;top:365.92px;background:#c2c2c6"></div><div class="knob sh" style="left:434.10px;top:363.92px;background:#fafafa"></div>
<div class="trk" style="left:489.80px;top:365.92px;background:#a8e2c0"></div><div class="knob" style="left:497.60px;top:363.92px;background:#22b862"></div>
<div class="trk" style="left:559.00px;top:365.92px;background:#e2f4ea"></div><div class="knob" style="left:566.80px;top:363.92px;background:#a6e3c0"></div>
<div class="t rw" style="left:617.00px;top:364.82px;font-size:8px;letter-spacing:0.477px;transform:scaleX(0.8800);transform-origin:0 0;">3 min</div>

<div class="t rw" style="left:724.70px;top:364.82px;font-size:8px;letter-spacing:-0.208px;transform:scaleX(0.8800);transform-origin:0 0;">Owner</div>
<div class="t rw" style="left:795.00px;top:364.82px;font-size:8px;letter-spacing:-0.049px;transform:scaleX(0.8800);transform-origin:0 0;">(UTC +05:00) Karac...</div>

<div class="trk" style="left:905.10px;top:365.92px;background:#a8e2c0"></div><div class="knob" style="left:912.90px;top:363.92px;background:#22b862"></div>
<div class="ic" style="left:949.6px;top:363.02px"><svg viewBox="0 0 24 24"><path d="M3 17.25V21h3.75L17.81 9.94l-3.75-3.75L3 17.25zM20.71 7.04a1 1 0 0 0 0-1.41l-2.34-2.34a1 1 0 0 0-1.41 0l-1.83 1.83 3.75 3.75 1.83-1.83z"/></svg></div>
<div class="ln" style="top:379.45px"></div>
<div class="cb" style="left:19.7px;top:386.67px"></div>
<div class="av" style="left:37.8px;top:385.17px;background:#3b3d4a"><span>DU</span></div>
<div class="t rw" style="left:55.90px;top:386.97px;font-size:8px;letter-spacing:-0.037px;transform:scaleX(0.8800);transform-origin:0 0;">Danish User</div>
<div class="t rw" style="left:316.60px;top:386.97px;font-size:8px;letter-spacing:0.169px;transform:scaleX(0.8800);transform-origin:0 0;">Video (continuous)</div>

<div class="trk" style="left:434.30px;top:388.07px;background:#c2c2c6"></div><div class="knob sh" style="left:434.10px;top:386.07px;background:#fafafa"></div>
<div class="trk" style="left:489.80px;top:388.07px;background:#a8e2c0"></div><div class="knob" style="left:497.60px;top:386.07px;background:#22b862"></div>
<div class="trk" style="left:559.00px;top:388.07px;background:#e2f4ea"></div><div class="knob" style="left:566.80px;top:386.07px;background:#a6e3c0"></div>
<div class="t rw" style="left:617.00px;top:386.97px;font-size:8px;letter-spacing:0.477px;transform:scaleX(0.8800);transform-origin:0 0;">3 min</div>

<div class="t rw" style="left:724.70px;top:386.97px;font-size:8px;letter-spacing:-0.038px;transform:scaleX(0.8800);transform-origin:0 0;">Regular User</div>

<div class="t rw" style="left:795.00px;top:386.97px;font-size:8px;letter-spacing:-0.049px;transform:scaleX(0.8800);transform-origin:0 0;">(UTC +05:00) Karac...</div>

<div class="trk" style="left:905.10px;top:388.07px;background:#a8e2c0"></div><div class="knob" style="left:912.90px;top:386.07px;background:#22b862"></div>
<div class="ic" style="left:949.6px;top:385.17px"><svg viewBox="0 0 24 24"><path d="M3 17.25V21h3.75L17.81 9.94l-3.75-3.75L3 17.25zM20.71 7.04a1 1 0 0 0 0-1.41l-2.34-2.34a1 1 0 0 0-1.41 0l-1.83 1.83 3.75 3.75 1.83-1.83z"/></svg></div>
<div class="ic" style="left:965.9px;top:385.07px"><svg viewBox="0 0 24 24"><path d="M6 19c0 1.1.9 2 2 2h8c1.1 0 2-.9 2-2V7H6v12zM19 4h-3.5l-1-1h-5l-1 1H5v2h14V4z"/></svg></div>
<div class="ln" style="top:401.60px"></div>
<div class="cb" style="left:19.7px;top:408.82px"></div>
<div class="av" style="left:37.8px;top:407.32px;background:#3f8ab8"><span style="font-size:7px;top:2.6px">N</span></div>
<div class="t rw" style="left:55.90px;top:409.12px;font-size:8px;letter-spacing:0.081px;transform:scaleX(0.8800);transform-origin:0 0;">Nsahw</div>
<div class="t rw" style="left:316.60px;top:409.12px;font-size:8px;letter-spacing:0.131px;transform:scaleX(0.8800);transform-origin:0 0;">Screenshots (15 min)</div>

<div class="trk" style="left:434.30px;top:410.23px;background:#c2c2c6"></div><div class="knob sh" style="left:434.10px;top:408.23px;background:#fafafa"></div>
<div class="trk" style="left:489.80px;top:410.23px;background:#a8e2c0"></div><div class="knob" style="left:497.60px;top:408.23px;background:#22b862"></div>
<div class="trk" style="left:559.00px;top:410.23px;background:#e2f4ea"></div><div class="knob" style="left:566.80px;top:408.23px;background:#a6e3c0"></div>
<div class="t rw" style="left:617.00px;top:409.12px;font-size:8px;letter-spacing:0.477px;transform:scaleX(0.8800);transform-origin:0 0;">3 min</div>

<div class="t rw" style="left:724.70px;top:409.12px;font-size:8px;letter-spacing:-0.038px;transform:scaleX(0.8800);transform-origin:0 0;">Regular User</div>

<div class="t rw" style="left:795.00px;top:409.12px;font-size:8px;letter-spacing:0.047px;transform:scaleX(0.8800);transform-origin:0 0;">(UTC +07:00) Jakart...</div>

<div class="trk" style="left:905.10px;top:410.23px;background:#a8e2c0"></div><div class="knob" style="left:912.90px;top:408.23px;background:#22b862"></div>
<div class="ic" style="left:949.6px;top:407.32px"><svg viewBox="0 0 24 24"><path d="M3 17.25V21h3.75L17.81 9.94l-3.75-3.75L3 17.25zM20.71 7.04a1 1 0 0 0 0-1.41l-2.34-2.34a1 1 0 0 0-1.41 0l-1.83 1.83 3.75 3.75 1.83-1.83z"/></svg></div>
<div class="ic" style="left:965.9px;top:407.23px"><svg viewBox="0 0 24 24"><path d="M6 19c0 1.1.9 2 2 2h8c1.1 0 2-.9 2-2V7H6v12zM19 4h-3.5l-1-1h-5l-1 1H5v2h14V4z"/></svg></div>
<div class="ic" style="left:981.9px;top:407.82px;width:12px;height:12px"><svg viewBox="0 0 24 24"><path d="M2.01 21L23 12 2.01 3 2 10l15 2-15 2z"/></svg></div>
<div class="ln" style="top:423.75px"></div>
<svg style="position:absolute;left:0;top:0" width="1024" height="517" fill="#62626a"><path d="M400.20 123.88L405.30 123.88L402.75 126.23Z"/><path d="M700.45 123.88L705.55 123.88L703.00 126.23Z"/><path d="M867.65 123.88L872.75 123.88L870.20 126.23Z"/><path d="M400.20 146.03L405.30 146.03L402.75 148.38Z"/><path d="M700.45 146.03L705.55 146.03L703.00 148.38Z"/><path d="M770.95 146.03L776.05 146.03L773.50 148.38Z"/><path d="M867.65 146.03L872.75 146.03L870.20 148.38Z"/><path d="M400.20 168.17L405.30 168.17L402.75 170.52Z"/><path d="M700.45 168.17L705.55 168.17L703.00 170.52Z"/><path d="M867.65 168.17L872.75 168.17L870.20 170.52Z"/><path d="M400.20 190.32L405.30 190.32L402.75 192.67Z"/><path d="M700.45 190.32L705.55 190.32L703.00 192.67Z"/><path d="M867.65 190.32L872.75 190.32L870.20 192.67Z"/><path d="M400.20 212.47L405.30 212.47L402.75 214.82Z"/><path d="M700.45 212.47L705.55 212.47L703.00 214.82Z"/><path d="M867.65 212.47L872.75 212.47L870.20 214.82Z"/><path d="M400.20 234.62L405.30 234.62L402.75 236.97Z"/><path d="M700.45 234.62L705.55 234.62L703.00 236.97Z"/><path d="M867.65 234.62L872.75 234.62L870.20 236.97Z"/><path d="M400.20 256.77L405.30 256.77L402.75 259.12Z"/><path d="M700.45 256.77L705.55 256.77L703.00 259.12Z"/><path d="M770.95 256.77L776.05 256.77L773.50 259.12Z"/><path d="M867.65 256.77L872.75 256.77L870.20 259.12Z"/><path d="M400.20 278.92L405.30 278.92L402.75 281.27Z"/><path d="M700.45 278.92L705.55 278.92L703.00 281.27Z"/><path d="M770.95 278.92L776.05 278.92L773.50 281.27Z"/><path d="M867.65 278.92L872.75 278.92L870.20 281.27Z"/><path d="M400.20 301.07L405.30 301.07L402.75 303.43Z"/><path d="M700.45 301.07L705.55 301.07L703.00 303.43Z"/><path d="M867.65 301.07L872.75 301.07L870.20 303.43Z"/><path d="M400.20 323.22L405.30 323.22L402.75 325.57Z"/><path d="M700.45 323.22L705.55 323.22L703.00 325.57Z"/><path d="M867.65 323.22L872.75 323.22L870.20 325.57Z"/><path d="M400.20 345.37L405.30 345.37L402.75 347.72Z"/><path d="M700.45 345.37L705.55 345.37L703.00 347.72Z"/><path d="M867.65 345.37L872.75 345.37L870.20 347.72Z"/><path d="M400.20 367.52L405.30 367.52L402.75 369.87Z"/><path d="M700.45 367.52L705.55 367.52L703.00 369.87Z"/><path d="M867.65 367.52L872.75 367.52L870.20 369.87Z"/><path d="M400.20 389.67L405.30 389.67L402.75 392.02Z"/><path d="M700.45 389.67L705.55 389.67L703.00 392.02Z"/><path d="M770.95 389.67L776.05 389.67L773.50 392.02Z"/><path d="M867.65 389.67L872.75 389.67L870.20 392.02Z"/><path d="M400.20 411.82L405.30 411.82L402.75 414.18Z"/><path d="M700.45 411.82L705.55 411.82L703.00 414.18Z"/><path d="M770.95 411.82L776.05 411.82L773.50 414.18Z"/><path d="M867.65 411.82L872.75 411.82L870.20 414.18Z"/></svg>
</div>
</body></html>
